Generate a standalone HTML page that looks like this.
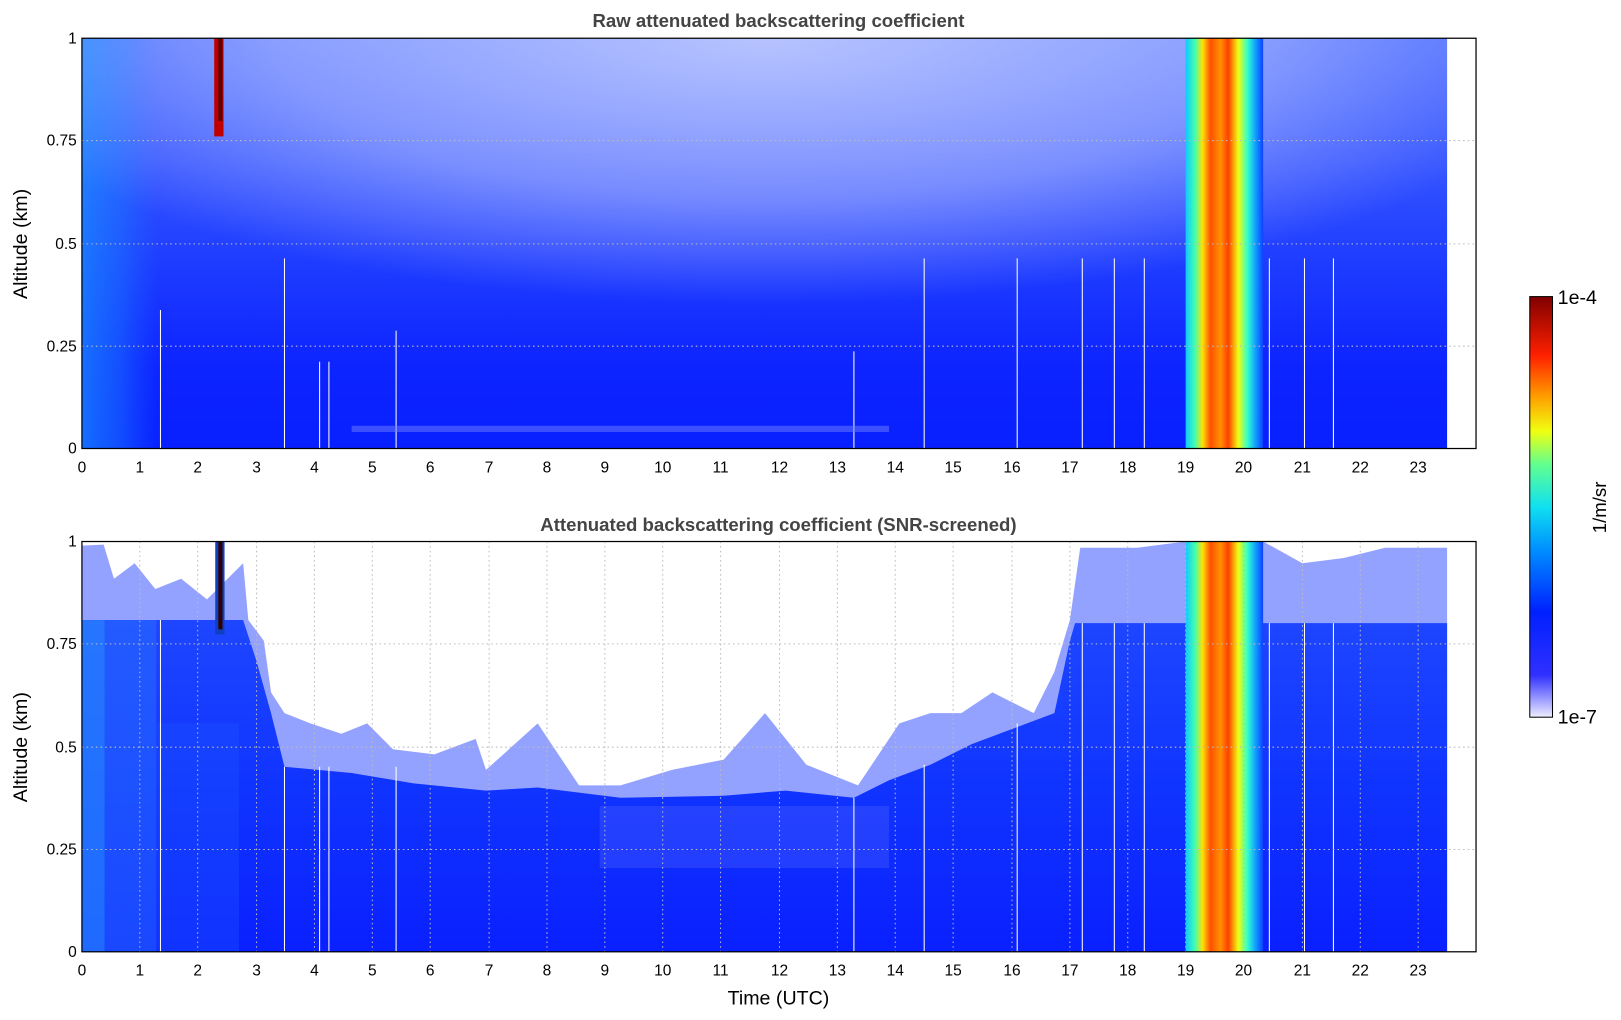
<!DOCTYPE html>
<html><head><meta charset="utf-8"><style>
html,body{margin:0;padding:0;background:#fff;}
svg{display:block;font-family:"Liberation Sans","DejaVu Sans",sans-serif;}
</style></head><body>
<svg width="1621" height="1020" viewBox="0 0 1568 987" xmlns="http://www.w3.org/2000/svg">
<defs>
<linearGradient id="topv" x1="0" y1="0" x2="0" y2="1">
<stop offset="0" stop-color="#4a6aff"/>
<stop offset="0.3" stop-color="#3454ff"/>
<stop offset="0.55" stop-color="#1e3cff"/>
<stop offset="0.8" stop-color="#0d24ff"/>
<stop offset="1" stop-color="#0820ff"/>
</linearGradient>
<radialGradient id="whiteblob" cx="0.5" cy="0" r="0.6" gradientTransform="translate(0.5 0) scale(1 1.3) translate(-0.5 0)">
<stop offset="0" stop-color="#fff" stop-opacity="0.6"/>
<stop offset="0.6" stop-color="#fff" stop-opacity="0.35"/>
<stop offset="1" stop-color="#fff" stop-opacity="0"/>
</radialGradient>
<linearGradient id="lefth" x1="0" y1="0" x2="1" y2="0">
<stop offset="0" stop-color="#1a8cff" stop-opacity="0.9"/>
<stop offset="0.5" stop-color="#1a7cff" stop-opacity="0.6"/>
<stop offset="1" stop-color="#1a6cff" stop-opacity="0"/>
</linearGradient>
<linearGradient id="band" x1="0" y1="0" x2="1" y2="0">
<stop offset="0" stop-color="#10c8ff"/>
<stop offset="0.12" stop-color="#40ffb0"/>
<stop offset="0.22" stop-color="#ffe000"/>
<stop offset="0.32" stop-color="#ff5000"/>
<stop offset="0.45" stop-color="#ff9000"/>
<stop offset="0.55" stop-color="#ff4000"/>
<stop offset="0.68" stop-color="#f0ff10"/>
<stop offset="0.8" stop-color="#30ffd0"/>
<stop offset="0.9" stop-color="#10a0ff"/>
<stop offset="1" stop-color="#1040ff"/>
</linearGradient>
<linearGradient id="botv" x1="0" y1="0" x2="0" y2="1">
<stop offset="0" stop-color="#1e46ff"/>
<stop offset="0.5" stop-color="#1034ff"/>
<stop offset="1" stop-color="#0a20ff"/>
</linearGradient>
<linearGradient id="cbar" x1="0" y1="1" x2="0" y2="0">
<stop offset="0" stop-color="#eeeeff"/>
<stop offset="0.04" stop-color="#a0a0ff"/>
<stop offset="0.1" stop-color="#3030ff"/>
<stop offset="0.25" stop-color="#0020ff"/>
<stop offset="0.4" stop-color="#0090ff"/>
<stop offset="0.5" stop-color="#10e0f0"/>
<stop offset="0.6" stop-color="#60ff90"/>
<stop offset="0.68" stop-color="#f0ff10"/>
<stop offset="0.76" stop-color="#ffa000"/>
<stop offset="0.86" stop-color="#ff2000"/>
<stop offset="1" stop-color="#800000"/>
</linearGradient>
</defs>

<!-- TOP PLOT -->
<text x="753" y="26" font-size="18" font-weight="bold" fill="#444" text-anchor="middle">Raw attenuated backscattering coefficient</text>
<rect x="79" y="37" width="1321" height="397" fill="url(#topv)"/>
<rect x="79" y="37" width="75" height="397" fill="url(#lefth)" opacity="0.8"/>
<rect x="79" y="37" width="1321" height="330" fill="url(#whiteblob)"/>
<rect x="1147" y="37" width="75" height="397" fill="url(#band)"/>
<rect x="207" y="37" width="9" height="95" fill="#c00000"/>
<rect x="211" y="37" width="4" height="80" fill="#600000"/>
<g stroke="#fff" stroke-width="1">
<line x1="155" y1="300" x2="155" y2="434"/><line x1="275" y1="250" x2="275" y2="434"/><line x1="309" y1="350" x2="309" y2="434"/><line x1="318" y1="350" x2="318" y2="434"/><line x1="383" y1="320" x2="383" y2="434"/><line x1="826" y1="340" x2="826" y2="434"/><line x1="894" y1="250" x2="894" y2="434"/><line x1="984" y1="250" x2="984" y2="434"/><line x1="1047" y1="250" x2="1047" y2="434"/><line x1="1078" y1="250" x2="1078" y2="434"/><line x1="1107" y1="250" x2="1107" y2="434"/><line x1="1228" y1="250" x2="1228" y2="434"/><line x1="1262" y1="250" x2="1262" y2="434"/><line x1="1290" y1="250" x2="1290" y2="434"/>
</g>
<rect x="340" y="412" width="520" height="6" fill="#7080ff" opacity="0.5"/>
<g stroke="#bbb" stroke-width="1" stroke-dasharray="1.5,3">
<line x1="79" y1="136" x2="1428" y2="136"/><line x1="79" y1="236" x2="1428" y2="236"/><line x1="79" y1="335" x2="1428" y2="335"/>
</g>
<rect x="79" y="37" width="1349" height="397" fill="none" stroke="#000" stroke-width="1.2"/>

<!-- BOTTOM PLOT -->
<text x="753" y="514" font-size="18" font-weight="bold" fill="#444" text-anchor="middle">Attenuated backscattering coefficient (SNR-screened)</text>
<path d="M79,528 L100,527 L110,560 L130,545 L150,570 L175,560 L200,580 L235,545 L240,600 L255,620 L262,670 L275,690 L300,700 L330,710 L355,700 L380,725 L420,730 L460,715 L470,745 L520,700 L560,760 L600,760 L650,745 L700,735 L740,690 L780,740 L830,760 L870,700 L900,690 L930,690 L960,670 L1000,690 L1020,650 L1035,600 L1045,530 L1100,530 L1147,524 L1222,524 L1260,545 L1300,540 L1340,530 L1400,530 L1400,921 L79,921 Z" fill="#2a46ff" opacity="0.5"/>
<path d="M79,600 L235,600 L248,640 L262,690 L275,742 L340,748 L400,758 L470,765 L520,762 L600,772 L700,770 L760,765 L826,772 L860,755 L900,740 L940,720 L980,705 L1020,690 L1035,620 L1040,603 L1147,603 L1222,603 L1400,603 L1400,921 L79,921 Z" fill="url(#botv)"/>
<rect x="79" y="600" width="22" height="321" fill="#2a8aff" opacity="0.7"/>
<rect x="101" y="600" width="50" height="321" fill="#2a70ff" opacity="0.5"/>
<rect x="151" y="700" width="80" height="221" fill="#1c50ff" opacity="0.4"/>
<rect x="580" y="780" width="280" height="60" fill="#5a6aff" opacity="0.3"/>
<rect x="1147" y="524" width="75" height="397" fill="url(#band)"/>
<rect x="208" y="524" width="9" height="90" fill="#1040c0"/>
<rect x="211" y="524" width="4" height="85" fill="#300000"/>
<g stroke="#fff" stroke-width="1">
<line x1="155" y1="600" x2="155" y2="921"/><line x1="275" y1="742" x2="275" y2="921"/><line x1="309" y1="742" x2="309" y2="921"/><line x1="318" y1="742" x2="318" y2="921"/><line x1="383" y1="742" x2="383" y2="921"/><line x1="826" y1="772" x2="826" y2="921"/><line x1="894" y1="740" x2="894" y2="921"/><line x1="984" y1="700" x2="984" y2="921"/><line x1="1047" y1="603" x2="1047" y2="921"/><line x1="1078" y1="603" x2="1078" y2="921"/><line x1="1107" y1="603" x2="1107" y2="921"/><line x1="1228" y1="603" x2="1228" y2="921"/><line x1="1262" y1="603" x2="1262" y2="921"/><line x1="1290" y1="603" x2="1290" y2="921"/>
</g>
<g stroke="#bbb" stroke-width="1" stroke-dasharray="1.5,3">
<line x1="79" y1="623" x2="1428" y2="623"/><line x1="79" y1="723" x2="1428" y2="723"/><line x1="79" y1="822" x2="1428" y2="822"/>
<line x1="135" y1="524" x2="135" y2="921"/><line x1="191" y1="524" x2="191" y2="921"/><line x1="248" y1="524" x2="248" y2="921"/><line x1="304" y1="524" x2="304" y2="921"/><line x1="360" y1="524" x2="360" y2="921"/><line x1="416" y1="524" x2="416" y2="921"/><line x1="473" y1="524" x2="473" y2="921"/><line x1="529" y1="524" x2="529" y2="921"/><line x1="585" y1="524" x2="585" y2="921"/><line x1="641" y1="524" x2="641" y2="921"/><line x1="697" y1="524" x2="697" y2="921"/><line x1="754" y1="524" x2="754" y2="921"/><line x1="810" y1="524" x2="810" y2="921"/><line x1="866" y1="524" x2="866" y2="921"/><line x1="922" y1="524" x2="922" y2="921"/><line x1="979" y1="524" x2="979" y2="921"/><line x1="1035" y1="524" x2="1035" y2="921"/><line x1="1091" y1="524" x2="1091" y2="921"/><line x1="1147" y1="524" x2="1147" y2="921"/><line x1="1203" y1="524" x2="1203" y2="921"/><line x1="1260" y1="524" x2="1260" y2="921"/><line x1="1316" y1="524" x2="1316" y2="921"/><line x1="1372" y1="524" x2="1372" y2="921"/>
</g>
<rect x="79" y="524" width="1349" height="397" fill="none" stroke="#000" stroke-width="1.2"/>

<!-- Y labels -->
<g font-size="15" text-anchor="end" fill="#000">
<text x="74" y="42">1</text><text x="74" y="141">0.75</text><text x="74" y="241">0.5</text><text x="74" y="340">0.25</text><text x="74" y="439">0</text>
<text x="74" y="529">1</text><text x="74" y="628">0.75</text><text x="74" y="728">0.5</text><text x="74" y="827">0.25</text><text x="74" y="926">0</text>
</g>
<text transform="translate(26,236) rotate(-90)" font-size="19" text-anchor="middle">Altitude (km)</text>
<text transform="translate(26,723) rotate(-90)" font-size="19" text-anchor="middle">Altitude (km)</text>

<!-- X labels -->
<g font-size="15" text-anchor="middle" fill="#000">
<g transform="translate(0,457)">
<text x="79">0</text><text x="135">1</text><text x="191">2</text><text x="248">3</text><text x="304">4</text><text x="360">5</text><text x="416">6</text><text x="473">7</text><text x="529">8</text><text x="585">9</text><text x="641">10</text><text x="697">11</text><text x="754">12</text><text x="810">13</text><text x="866">14</text><text x="922">15</text><text x="979">16</text><text x="1035">17</text><text x="1091">18</text><text x="1147">19</text><text x="1203">20</text><text x="1260">21</text><text x="1316">22</text><text x="1372">23</text>
</g>
<g transform="translate(0,944)">
<text x="79">0</text><text x="135">1</text><text x="191">2</text><text x="248">3</text><text x="304">4</text><text x="360">5</text><text x="416">6</text><text x="473">7</text><text x="529">8</text><text x="585">9</text><text x="641">10</text><text x="697">11</text><text x="754">12</text><text x="810">13</text><text x="866">14</text><text x="922">15</text><text x="979">16</text><text x="1035">17</text><text x="1091">18</text><text x="1147">19</text><text x="1203">20</text><text x="1260">21</text><text x="1316">22</text><text x="1372">23</text>
</g>
</g>
<text x="753" y="972" font-size="19" text-anchor="middle">Time (UTC)</text>

<!-- colorbar -->
<rect x="1480" y="287" width="22" height="407" fill="url(#cbar)" stroke="#000" stroke-width="1"/>
<text x="1507" y="294" font-size="19">1e-4</text>
<text x="1507" y="700" font-size="19">1e-7</text>
<text transform="translate(1554,491) rotate(-90)" font-size="18" text-anchor="middle">1/m/sr</text>
</svg>
</body></html>
